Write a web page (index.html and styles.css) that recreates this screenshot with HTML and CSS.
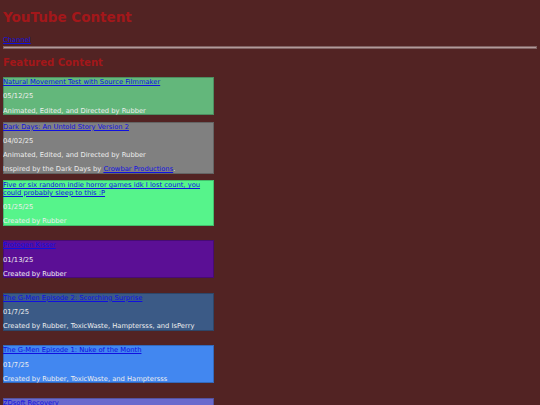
FILE: index.html
```html
<!DOCTYPE html>
<html lang="en">
<head>
<meta charset="utf-8">
<title>YouTube Content</title>
<link rel="stylesheet" href="styles.css">
</head>
<body>
<h1 class="title">YouTube Content</h1>
<a class="link" href="#">Channel</a>
<hr class="rule">
<h2 class="section-title">Featured Content</h2>

<div class="card card-green">
  <a class="link" href="#">Natural Movement Test with Source Filmmaker</a>
  <p class="line">05/12/25</p>
  <p class="line">Animated, Edited, and Directed by Rubber</p>
</div>

<div class="card card-gray">
  <a class="link" href="#">Dark Days: An Untold Story Version 2</a>
  <p class="line">04/02/25</p>
  <p class="line">Animated, Edited, and Directed by Rubber</p>
  <p class="line">Inspired by the Dark Days by <a class="link" href="#">Crowbar Productions</a>.</p>
</div>

<div class="card card-lime">
  <a class="link" href="#">Five or six random indie horror games idk I lost count, you could probably sleep to this :P</a>
  <p class="line">01/25/25</p>
  <p class="line">Created by Rubber</p>
</div>

<div class="card card-purple spaced">
  <a class="link" href="#">Protogen Kisser</a>
  <p class="line">01/13/25</p>
  <p class="line">Created by Rubber</p>
</div>

<div class="card card-slate spaced">
  <a class="link" href="#">The G-Men Episode 2: Scorching Surprise</a>
  <p class="line">01/7/25</p>
  <p class="line">Created by Rubber, ToxicWaste, Hamptersss, and IsPerry</p>
</div>

<div class="card card-blue spaced">
  <a class="link" href="#">The G-Men Episode 1: Nuke of the Month</a>
  <p class="line">01/7/25</p>
  <p class="line">Created by Rubber, ToxicWaste, and Hamptersss</p>
</div>

<div class="card card-violet spaced">
  <a class="link" href="#">ZDsoft Recovery</a>
  <p class="line">12/25/24</p>
  <p class="line">Created by Rubber</p>
</div>
</body>
</html>
```

FILE: styles.css
```css
html {
  background: #522323;
}

body {
  margin: 0 3px;
  padding-top: 0.1px;
  color: #eeeeee;
  font-family: "DejaVu Sans", Verdana, sans-serif;
  font-size: 6.75px;
  line-height: 7.5px;
}

.title {
  font-size: 13.5px;
  line-height: 16px;
  font-weight: bold;
  color: #a3171a;
  margin: 9px 0 11.5px;
}

.section-title {
  font-size: 10.1px;
  line-height: 12px;
  font-weight: bold;
  color: #a3171a;
  margin: 8.5px 0 8px;
}

.link {
  color: #1010e0;
}

.rule {
  margin: 1.5px 0 0;
  height: 1px;
  border: 1px solid #806262;
  background: #b39a9a;
}

.card {
  width: 211px;
  padding-top: 2px;
  box-shadow: inset 0 0 0 1px rgba(0, 0, 0, 0.22);
  margin: 0 0 6.5px;
}

.card.spaced {
  margin-top: 14.5px;
}

.line {
  margin: 6.75px 0 0;
}

.card-green { background: #63b77b; }
.card-gray { background: #808080; }
.card-lime { background: #56f48b; }
.card-purple { background: #5b0f95; }
.card-slate { background: #3b5a86; }
.card-blue { background: #4287f0; }
.card-violet { background: #6a6acd; }
```
